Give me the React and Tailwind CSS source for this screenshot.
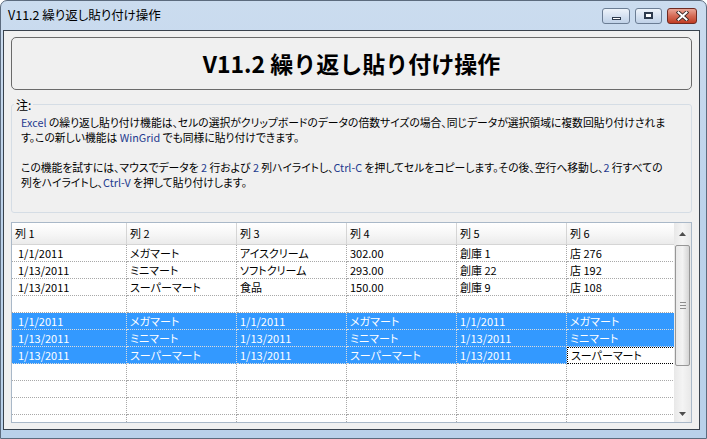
import React from 'react';

const headers = ['列 1', '列 2', '列 3', '列 4', '列 5', '列 6'];
const widths = ['w-[115px]', 'w-[110px]', 'w-[110px]', 'w-[110px]', 'w-[110px]', 'w-[110px]'];

const rows = [
  { cells: ['1/1/2011', 'メガマート', 'アイスクリーム', '302.00', '創庫 1', '店 276'] },
  { cells: ['1/13/2011', 'ミニマート', 'ソフトクリーム', '293.00', '創庫 22', '店 192'] },
  { cells: ['1/13/2011', 'スーパーマート', '食品', '150.00', '創庫 9', '店 108'] },
  { cells: ['', '', '', '', '', ''] },
  { sel: true, cells: ['1/1/2011', 'メガマート', '1/1/2011', 'メガマート', '1/1/2011', 'メガマート'] },
  { sel: true, cells: ['1/13/2011', 'ミニマート', '1/13/2011', 'ミニマート', '1/13/2011', 'ミニマート'] },
  { sel: true, focus: 5, cells: ['1/13/2011', 'スーパーマート', '1/13/2011', 'スーパーマート', '1/13/2011', 'スーパーマート'] },
  { cells: ['', '', '', '', '', ''] },
  { cells: ['', '', '', '', '', ''] },
  { cells: ['', '', '', '', '', ''] },
  { cells: ['', '', '', '', '', ''] },
];

function Blue({ children }) {
  return <span className="text-[#1f3b8f]">{children}</span>;
}

function TitleButtons() {
  return (
    <div className="flex items-center gap-[5px] pr-[9px]">
      <div className="w-[28px] h-[16px] rounded-[3px] border border-[#6b7d94] bg-gradient-to-b from-[#eef3fa] via-[#d6e2f1] to-[#c0d2e8] flex items-end justify-center pb-[3px]">
        <div className="w-[9px] h-[3px] bg-white border border-[#2d3b4e]" />
      </div>
      <div className="w-[27px] h-[16px] rounded-[3px] border border-[#6b7d94] bg-gradient-to-b from-[#eef3fa] via-[#d6e2f1] to-[#c0d2e8] flex items-center justify-center">
        <div className="w-[9px] h-[7px] bg-white border-2 border-[#2d3b4e]" />
      </div>
      <div className="w-[30px] h-[16px] rounded-[3px] border border-[#6e2a22] bg-gradient-to-b from-[#e9a596] via-[#d46a55] to-[#c03b22] flex items-center justify-center">
        <svg width="13" height="10" viewBox="0 0 13 10">
          <path d="M2.5 1.5 L10.5 8.5 M10.5 1.5 L2.5 8.5" stroke="#3a2a28" strokeWidth="3.8" strokeLinecap="square" />
          <path d="M2.5 1.5 L10.5 8.5 M10.5 1.5 L2.5 8.5" stroke="#ffffff" strokeWidth="2" strokeLinecap="square" />
        </svg>
      </div>
    </div>
  );
}

function Scrollbar() {
  return (
    <div className="w-[17px] flex flex-col bg-gradient-to-r from-[#e8e8e8] via-[#f4f4f4] to-[#e8e8e8]">
      <div className="h-[22px] flex items-center justify-center">
        <svg width="7" height="4" viewBox="0 0 7 4"><path d="M3.5 0 L7 4 L0 4 Z" fill="#4d4d4d" /></svg>
      </div>
      <div className="mx-[1px] h-[121px] rounded-[2px] border border-[#979797] bg-gradient-to-r from-[#e9e9e9] via-[#f3f3f3] to-[#d4d4d4] flex flex-col items-center justify-center gap-[2px]">
        <div className="w-[6px] h-px bg-[#8c8c8c]" />
        <div className="w-[6px] h-px bg-[#8c8c8c]" />
        <div className="w-[6px] h-px bg-[#8c8c8c]" />
      </div>
      <div className="flex-1" />
      <div className="h-[17px] flex items-center justify-center">
        <svg width="7" height="4" viewBox="0 0 7 4"><path d="M0 0 L7 0 L3.5 4 Z" fill="#4d4d4d" /></svg>
      </div>
    </div>
  );
}

function Grid() {
  return (
    <div className="mt-[9px] h-[201px] flex border border-[#a9b8c8] bg-white overflow-hidden">
      <div className="flex-1 flex flex-col overflow-hidden">
        <div className="flex h-[22px] shrink-0">
          {headers.map((h, i) => (
            <div
              key={h}
              className={`${widths[i]} shrink-0 h-full pl-[3px] flex items-center border-r border-b border-[#d5d5d5] bg-gradient-to-b from-[#ffffff] via-[#f7f7f7] to-[#ebebeb] text-[11px] text-black`}
            >
              {h}
            </div>
          ))}
        </div>
        {rows.map((r, ri) => (
          <div key={ri} className="flex h-[17px] shrink-0">
            {r.cells.map((c, ci) => {
              const focused = r.focus === ci;
              const cls = focused
                ? 'bg-white text-black border border-dotted border-black'
                : r.sel
                ? 'bg-[#3399ff] text-white border-r border-b border-dotted border-[#dcdcdc]'
                : 'bg-white text-black border-r border-b border-dotted border-[#a8a8a8]';
              return (
                <div
                  key={ci}
                  className={`${widths[ci]} shrink-0 h-full ${ci === 0 ? 'pl-[6px]' : 'pl-[3px]'} flex items-center text-[11px] leading-none whitespace-nowrap overflow-hidden [font-feature-settings:'palt'] ${cls}`}
                >
                  {c}
                </div>
              );
            })}
          </div>
        ))}
      </div>
      <Scrollbar />
    </div>
  );
}

export default function App() {
  return (
    <div className="w-[707px] h-[439px] font-['Noto_Sans_CJK_JP',sans-serif] text-black">
      <div className="w-full h-full flex flex-col rounded-t-[7px] border border-[#5c6b7e] bg-gradient-to-b from-[#cbdcef] via-[#bcd2ea] to-[#b9d1ea] overflow-hidden">
        <div className="h-[29px] shrink-0 flex items-center justify-between">
          <div className="pl-[7px] text-[12.5px] text-black [font-feature-settings:'palt']">V11.2 繰り返し貼り付け操作</div>
          <TitleButtons />
        </div>
        <div className="flex-1 ml-[2px] mr-[6px] mb-[8px] border border-[#39424d] bg-[#f0f0f0] px-[7px] pt-[6px] flex flex-col">
          <div className="h-[53px] shrink-0 rounded-[5px] border border-[#6a6a6a] flex items-center justify-center">
            <span className="text-[23px] font-bold">V11.2 繰り返し貼り付け操作</span>
          </div>
          <fieldset className="mt-[7px] h-[116px] shrink-0 rounded-[3px] border border-[#d5dde5] px-[9px]">
            <legend className="ml-[-7px] px-[2px] text-[12px] leading-[15px]">注:</legend>
            <div className="pt-[3px] text-[10.8px] leading-[15px] whitespace-nowrap [font-feature-settings:'palt']">
              <div><Blue>Excel</Blue> の繰り返し貼り付け機能は、セルの選択がクリップボードのデータの倍数サイズの場合、同じデータが選択領域に複数回貼り付けされま</div>
              <div>す。この新しい機能は <Blue>WinGrid</Blue> でも同様に貼り付けできます。</div>
              <div className="h-[15px]" />
              <div>この機能を試すには、マウスでデータを <Blue>2</Blue> 行および <Blue>2</Blue> 列ハイライトし、<Blue>Ctrl-C</Blue> を押してセルをコピーします。その後、空行へ移動し、<Blue>2</Blue> 行すべての</div>
              <div>列をハイライトし、<Blue>Ctrl-V</Blue> を押して貼り付けします。</div>
            </div>
          </fieldset>
          <Grid />
        </div>
      </div>
    </div>
  );
}
